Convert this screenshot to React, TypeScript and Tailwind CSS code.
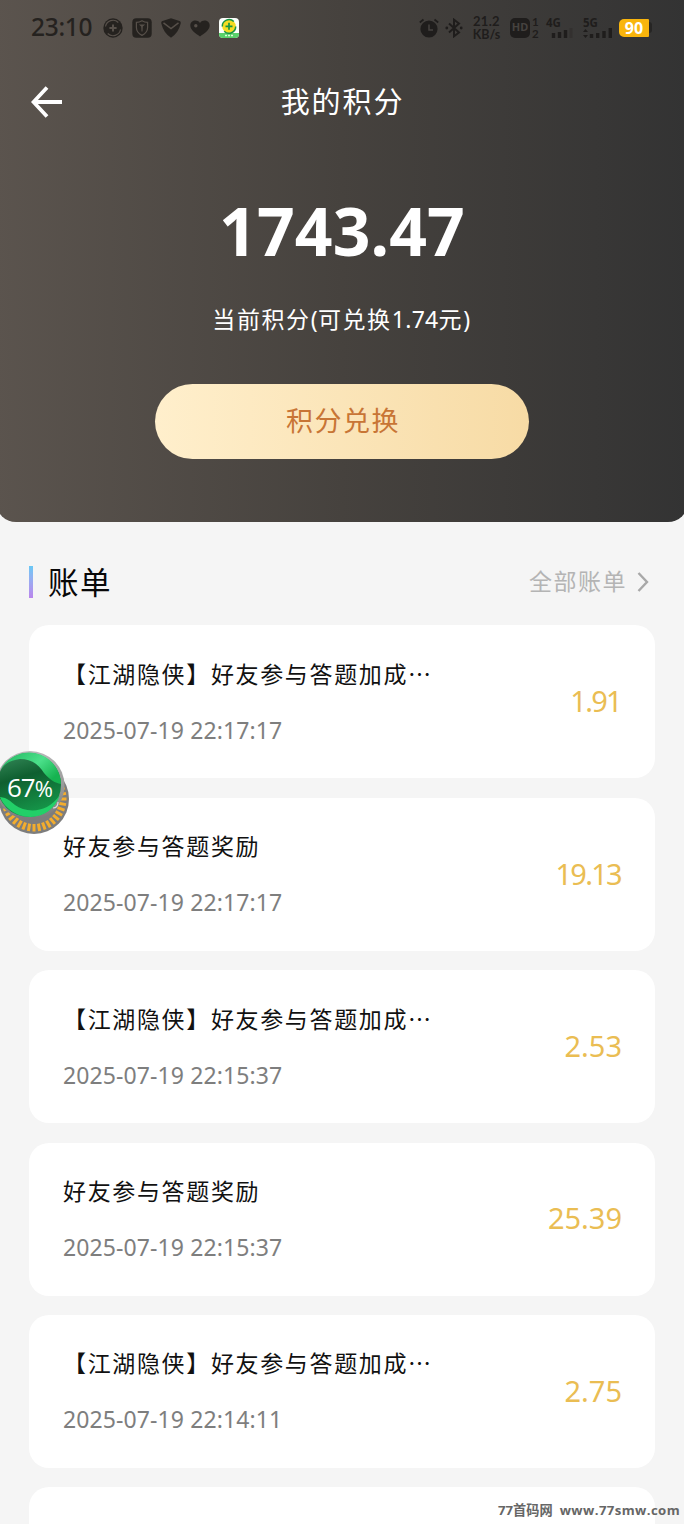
type Bill = {
  id: number;
  title: string;
  time: string;
  amount: string;
  // amounts with several narrow 1s are set tighter
  tight?: boolean;
};

const bills: Bill[] = [
  { id: 1, title: "【江湖隐侠】好友参与答题加成⋯", time: "2025-07-19 22:17:17", amount: "1.91", tight: true },
  { id: 2, title: "好友参与答题奖励", time: "2025-07-19 22:17:17", amount: "19.13", tight: true },
  { id: 3, title: "【江湖隐侠】好友参与答题加成⋯", time: "2025-07-19 22:15:37", amount: "2.53" },
  { id: 4, title: "好友参与答题奖励", time: "2025-07-19 22:15:37", amount: "25.39" },
  { id: 5, title: "【江湖隐侠】好友参与答题加成⋯", time: "2025-07-19 22:14:11", amount: "2.75" },
];

function NotificationIcons() {
  return (
    <div className="flex items-center gap-[9px] text-[#25221f]">
      <svg width="20" height="20" viewBox="0 0 20 20">
        <circle cx="10" cy="10" r="9.7" fill="currentColor" />
        <path d="M2.5 8.5a7.6 7.6 0 0 1 12.8-4M17.5 11.5a7.6 7.6 0 0 1-12.8 4" fill="none" stroke="#57504a" strokeWidth="1.2" />
        <path d="M10 6.4v7.2M6.4 10h7.2" stroke="#57504a" strokeWidth="2" />
      </svg>
      <svg width="20" height="20" viewBox="0 0 20 20">
        <rect x="0.3" y="0.3" width="19.4" height="19.4" rx="4" fill="currentColor" />
        <path d="M10 2.8c2 1.2 3.8 1.6 5.6 1.6v5c0 4-2.4 6.3-5.6 8-3.2-1.7-5.6-4-5.6-8v-5c1.8 0 3.6-.4 5.6-1.6Z" fill="none" stroke="#57504a" strokeWidth="1.2" />
        <path d="M6.8 6.5h6.4l-2.4 2-.3 5h-1l-.3-5Z" fill="#57504a" />
      </svg>
      <svg width="20" height="20" viewBox="0 0 20 20">
        <path d="M10 .3 18.5 3c1 .3 1.5 1.3 1.2 2.5C18.3 11.5 15 16.5 10 19.8 5 16.5 1.7 11.5.3 5.5 0 4.3.5 3.3 1.5 3Z" fill="currentColor" />
        <path d="M2.5 4.8 10 10.5l7.5-5.7" fill="none" stroke="#57504a" strokeWidth="1.5" />
      </svg>
      <svg width="20" height="20" viewBox="0 0 20 20">
        <path d="M10 18.5C6 15.5.3 12.3.3 7.5.3 2.5 7 .8 10 5c3-4.2 9.700-2.500 9.700 2.500 0 4.800-5.700 8-9.700 11Z" fill="currentColor" />
        <circle cx="5.8" cy="7.8" r="1.7" fill="#57504a" />
      </svg>
      <svg width="20" height="20" viewBox="0 0 20 20">
        <rect width="20" height="20" rx="4" fill="#fbfffb" />
        <path d="M0 15h20v1a4 4 0 0 1-4 4H4a4 4 0 0 1-4-4Z" fill="#59d16a" />
        <circle cx="10" cy="8.3" r="6.8" fill="#f5dc22" />
        <path d="M3.3 8.5A6.7 6.7 0 0 1 14.8 3.6M16.7 8.5A6.7 6.7 0 0 1 5.2 13.2" fill="none" stroke="#169544" strokeWidth="1.5" />
        <path d="M10 4.8v7M6.5 8.3h7" stroke="#169544" strokeWidth="1.7" />
        <path d="M6 17.500h8" stroke="#d9ffdc" strokeWidth="1.5" strokeDasharray="2 1" />
      </svg>
    </div>
  );
}

function SystemIcons() {
  return (
    <div className="flex items-center font-bold text-[#1f1d1c]">
      <svg width="20" height="20" viewBox="0 0 20 20" className="shrink-0">
        <circle cx="10" cy="11" r="8.6" fill="currentColor" />
        <path d="M.8 4.5 4.5 1.5M19.2 4.5 15.5 1.5" stroke="currentColor" strokeWidth="1.8" />
        <path d="M10 6.5V12h4" fill="none" stroke="#46423f" strokeWidth="1.5" />
      </svg>
      <svg width="18" height="20" viewBox="0 0 18 20" className="ml-[6px] shrink-0">
        <path d="m4 5.5 10 9L9 18.3V1.7l5 3.8-10 9" fill="none" stroke="currentColor" strokeWidth="2" />
        <circle cx="1.8" cy="10" r="1.4" fill="currentColor" />
        <circle cx="16.2" cy="10" r="1.4" fill="currentColor" />
      </svg>
      <div className="ml-[9px] flex w-[29px] flex-col items-center font-['Lato',sans-serif] text-[12.5px] leading-[13px]">
        <span className="text-[13px] tracking-[0.3px]">21.2</span>
        <span>KB/s</span>
      </div>
      <div className="ml-[9px] flex h-[20px] w-[20px] items-center justify-center rounded-[5px] bg-[#1f1d1c] text-[11px] text-[#46423f]">
        HD
      </div>
      <div className="ml-[2px] flex w-[7px] flex-col font-['Lato',sans-serif] text-[11.5px] leading-[11.5px]">
        <span>1</span>
        <span>2</span>
      </div>
      <div className="ml-[7px] flex h-[22px] w-[27px] flex-col text-[11.5px] leading-[12px]">
        <span>4G</span>
        <svg width="27" height="10" viewBox="0 0 27 10" className="-mt-px">
          <path d="M7.500 10V5M13.500 10V4M19.500 10V2" stroke="currentColor" strokeWidth="3.4" />
          <path d="M25 10V0" stroke="#33302f" strokeWidth="3" />
        </svg>
      </div>
      <div className="ml-[10px] flex h-[22px] w-[30px] flex-col text-[11.5px] leading-[12px]">
        <span>5G</span>
        <svg width="30" height="10" viewBox="0 0 30 10" className="-mt-px">
          <path d="M0 4 2.500 1 5 4ZM0 7l2.500 3L5 7Z" fill="currentColor" />
          <path d="M8.500 10V6M14.700 10V5M21 10V3M27.300 10V0" stroke="currentColor" strokeWidth="3.4" />
        </svg>
      </div>
      <div className="ml-[6px] flex h-[18px] w-[30px] items-center justify-center rounded-l-[5px] rounded-r-[1px] bg-[#f9b50d] text-[16px] text-white">
        90
      </div>
      <div className="h-[11px] w-[3px] rounded-r-full bg-[#262524]" />
    </div>
  );
}

function Header() {
  return (
    <header className="-ml-[4px] h-[522px] w-[692px] rounded-b-[20px] bg-linear-to-r from-[#5b544e] via-[#46423e] to-[#333333] px-[4px] text-white">
      <div className="flex h-[55px] items-center justify-between pr-[32px] pl-[31px]">
        <div className="flex items-center gap-[10px]">
          <span className="w-[62px] text-[24.5px] font-medium tracking-[-0.3px] whitespace-nowrap text-[#25221f]">23:10</span>
          <NotificationIcons />
        </div>
        <SystemIcons />
      </div>
      <div className="grid h-[93px] grid-cols-[100px_1fr_100px] items-center px-[31px]">
        <svg width="32" height="32" viewBox="0 0 32 32" fill="none" stroke="currentColor" strokeWidth="3.8">
          <path d="M31 16H3M16 1.500 2.500 16 16 30.500" />
        </svg>
        <h1 className="pl-[1px] text-center text-[29px] leading-[42px] tracking-[1.9px]">我的积分</h1>
      </div>
      <div className="flex flex-col items-center">
        <div className="mt-[41px] text-[66px] leading-[82px] font-bold tracking-[0.1px]">1743.47</div>
        <p className="mt-[30px] text-[23px] leading-[36px] tracking-[1.6px]">
          当前积分<span className="tracking-[0.3px]">(</span>可兑换<span className="tracking-[0.3px]">1.74</span>元)
        </p>
        <button className="mt-[46.500px] h-[75px] w-[374px] rounded-full bg-linear-to-r from-[#ffefcc] to-[#f7dba5] pl-[2px] text-[27px] tracking-[1.5px] text-[#c87535]">
          积分兑换
        </button>
      </div>
    </header>
  );
}

function BillCard({ bill }: { bill: Bill }) {
  return (
    <li className="flex h-[153px] items-center justify-between rounded-[20px] bg-white pr-[33px] pl-[34px]">
      <div className="flex flex-col gap-[20px]">
        <p className="text-[23px] leading-[36px] tracking-[1.65px] text-[#111]">{bill.title}</p>
        <p className="text-[23px] leading-[36px] tracking-[0.1px] text-[#7e7e7e]">{bill.time}</p>
      </div>
      <span className={bill.tight ? "pr-[1px] pb-[2px] text-[29px] tracking-[-1.7px] text-[#eabd53]" : "pb-[2px] text-[29px] text-[#eabd53]"}>
        {bill.amount}
      </span>
    </li>
  );
}

const ticks = Array.from({ length: 36 }, (_, i) => i * 10);

function MemoryBall() {
  return (
    <div className="absolute top-[748px] left-0 h-[90px] w-[72px]">
      <svg width="72" height="90" viewBox="0 0 72 90">
        <defs>
          <linearGradient id="rim" x1="0" y1="0" x2="0" y2="1">
            <stop offset="0" stopColor="#b8b8b8" />
            <stop offset="1" stopColor="#7b7b7b" />
          </linearGradient>
          <linearGradient id="ball" x1="0" y1="0" x2="0.3" y2="1">
            <stop offset="0" stopColor="#3a8f5f" />
            <stop offset="0.45" stopColor="#0f5f30" />
            <stop offset="1" stopColor="#159448" />
          </linearGradient>
          <linearGradient id="wave" x1="0" y1="0" x2="1" y2="0.6">
            <stop offset="0" stopColor="#1fb45e" />
            <stop offset="0.6" stopColor="#4be08a" />
            <stop offset="1" stopColor="#16b350" />
          </linearGradient>
        </defs>
        <circle cx="34" cy="51" r="35" fill="#7d7d7d" />
        {ticks.map((angle) => (
          <path key={angle} d="M34 76v7.500" stroke="#f3ad2e" strokeWidth="3" transform={`rotate(${angle} 34 51)`} />
        ))}
        <circle cx="30" cy="37.5" r="34.5" fill="url(#rim)" />
        <path d="M53 60q5 0 5-6" fill="none" stroke="#ddd" strokeWidth="1.2" />
        <circle cx="29" cy="37" r="32" fill="url(#ball)" />
        <path d="M0 23A32 32 0 0 1 61 36C55 35 50 32 44 25 38 15 30 11 20 11 11 12 5 15 0 23Z" fill="url(#wave)" />
        <path d="M0 49c8 1 10 4 15 8 11 8 32 9 45-10-6 18-24 26-41 20C10 63 3 57 0 49Z" fill="#22d068" />
      </svg>
      <div className="absolute top-[23px] left-[7px] flex items-baseline font-['Open_Sans',sans-serif] text-[26px] leading-[32px] tracking-[-1px] text-white">
        67<span className="text-[22px]">%</span>
      </div>
    </div>
  );
}

export default function App() {
  return (
    <div className="relative h-[1524px] w-[684px] overflow-hidden bg-[#f5f5f5] font-['Noto_Sans','Noto_Sans_CJK_SC',sans-serif]">
      <Header />
      <main className="px-[29px]">
        <div className="flex h-[103.400px] items-center justify-between pt-[16px]">
          <div className="flex items-center gap-[15px]">
            <span className="h-[32px] w-[4px] bg-linear-to-b from-[#68c8f5] to-[#b985ec]" />
            <h2 className="text-[30.5px] leading-[44px] tracking-[1.5px] text-[#080808]">账单</h2>
          </div>
          <a className="flex items-center gap-[10px] pr-[6px] text-[23px] tracking-[1.5px] text-[#b4b4b4]">
            全部账单
            <svg width="12" height="20" viewBox="0 0 12 20" fill="none" stroke="#a8a8a8" strokeWidth="2.4">
              <path d="m1.500 1 8.500 9-8.500 9" />
            </svg>
          </a>
        </div>
        <ul className="flex flex-col gap-[19.4px]">
          {bills.map((bill) => (
            <BillCard key={bill.id} bill={bill} />
          ))}
          <li className="h-[153px] rounded-[20px] bg-white" />
        </ul>
      </main>
      <MemoryBall />
      <div className="absolute top-[1500px] left-[498px] flex gap-[7px] font-['Open_Sans','Noto_Sans_CJK_SC',sans-serif] text-[13.2px] leading-[20px] font-bold whitespace-nowrap text-[#666]">
        <span>77首码网</span>
        <span className="tracking-[0.4px]">www.77smw.com</span>
      </div>
    </div>
  );
}
